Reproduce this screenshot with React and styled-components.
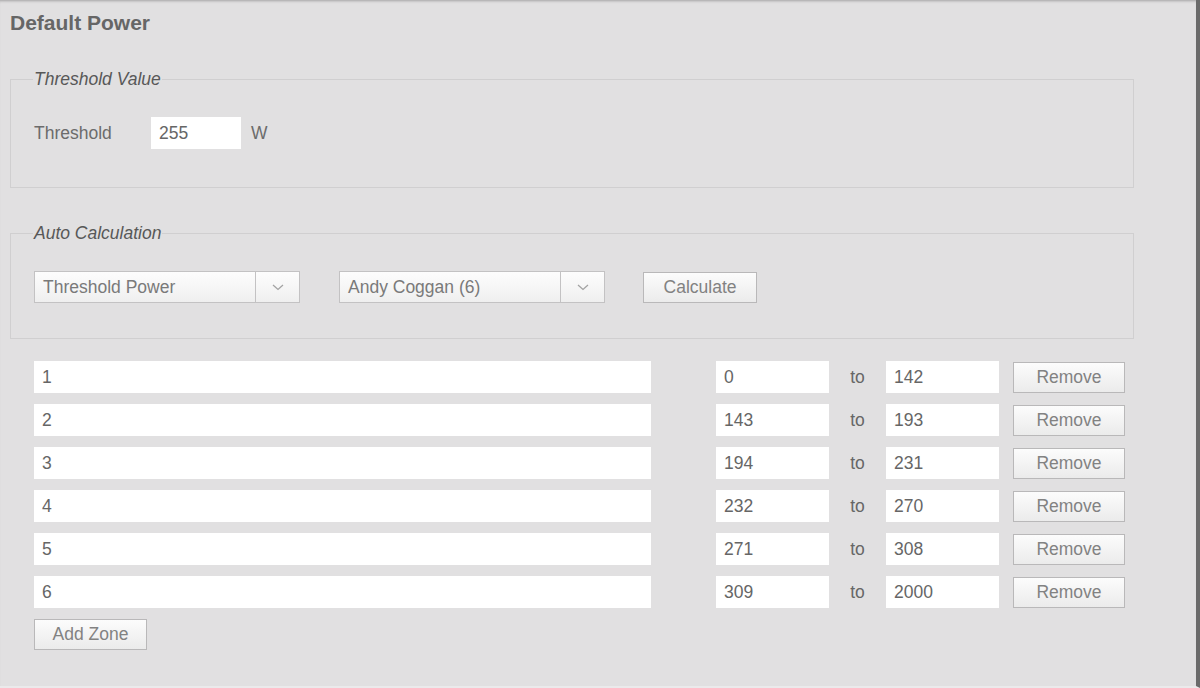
import React from "react";
import styled, { createGlobalStyle } from "styled-components";

const Global = createGlobalStyle`
  html, body { margin: 0; padding: 0; background: #e1e0e1; }
  body { font-family: "Liberation Sans", Arial, Helvetica, sans-serif; }
  * { box-sizing: border-box; }
`;

const Page = styled.div`
  position: relative;
  width: 1200px;
  height: 688px;
  overflow: hidden;
  background: #e1e0e1;
  padding: 11px 62px 0 10px;
  border-right: 4px solid #6a6a6a;
  box-shadow: inset 0 3px 3px -2px rgba(0, 0, 0, 0.28);
  border-bottom: 2px solid #ebeaeb;
`;

const Title = styled.h1`
  margin: 0;
  font-size: 21px;
  line-height: 24px;
  font-weight: bold;
  color: #666;
`;

const Fieldset = styled.fieldset`
  margin: ${(p) => p.$top}px 0 0 0;
  padding: 28px 23px ${(p) => p.$bottom}px 23px;
  border: 1px solid #d0cfd0;
  min-width: 0;
`;

const Legend = styled.legend`
  padding: 0 1px;
  margin-left: -1px;
  font-size: 17.5px;
  line-height: 20px;
  font-style: italic;
  color: #585858;
`;

const Row = styled.div`
  display: flex;
  align-items: center;
`;

const Label = styled.span`
  width: 117px;
  font-size: 17.5px;
  color: #6c6c6c;
`;

const Unit = styled.span`
  margin-left: 10px;
  font-size: 17.5px;
  color: #6c6c6c;
`;

const TextInput = styled.input`
  width: ${(p) => p.$w}px;
  height: 32px;
  border: none;
  outline: none;
  background: #fff;
  padding: 0 0 0 8px;
  font-family: inherit;
  font-size: 17.5px;
  color: #666;
  flex: none;
`;

const SelectBox = styled.div`
  display: flex;
  width: 266px;
  height: 32px;
  border: 1px solid #c3c2c3;
  background: linear-gradient(#fdfdfd, #efefef);
  margin-right: ${(p) => p.$gap || 0}px;
  flex: none;
`;

const SelectText = styled.div`
  flex: 1;
  padding-left: 8px;
  display: flex;
  align-items: center;
  font-size: 17.5px;
  color: #7a7a7a;
  border-right: 1px solid #c3c2c3;
`;

const SelectArrow = styled.div`
  width: 43px;
  display: flex;
  align-items: center;
  justify-content: center;
`;

const Button = styled.button`
  width: ${(p) => p.$w}px;
  height: 31px;
  border: 1px solid #b9b8b9;
  background: linear-gradient(#fcfcfc, #ebebeb);
  font-family: inherit;
  font-size: 17.5px;
  color: #828282;
  padding: 0;
  flex: none;
  cursor: pointer;
`;

const Zones = styled.div`
  margin-top: 22px;
  padding-left: 24px;
  display: flex;
  flex-direction: column;
  gap: 11px;
`;

const ZoneRow = styled.div`
  display: flex;
  align-items: center;
  height: 32px;
`;

const Spacer = styled.div`
  width: ${(p) => p.$w}px;
  flex: none;
`;

const To = styled.span`
  width: 57px;
  text-align: center;
  font-size: 17.5px;
  color: #666;
  flex: none;
`;

const Chevron = () => (
  <svg width="12" height="7" viewBox="0 0 12 7">
    <path d="M1 1 L6 5.5 L11 1" fill="none" stroke="#a3a3a3" strokeWidth="1.3" />
  </svg>
);

const zones = [
  ["1", "0", "142"],
  ["2", "143", "193"],
  ["3", "194", "231"],
  ["4", "232", "270"],
  ["5", "271", "308"],
  ["6", "309", "2000"],
];

export default function App() {
  return (
    <>
      <Global />
      <Page>
        <Title>Default Power</Title>
        <Fieldset $top={34} $bottom={38}>
          <Legend>Threshold Value</Legend>
          <Row>
            <Label>Threshold</Label>
            <TextInput $w={90} readOnly value="255" />
            <Unit>W</Unit>
          </Row>
        </Fieldset>
        <Fieldset $top={35} $bottom={35}>
          <Legend>Auto Calculation</Legend>
          <Row>
            <SelectBox $gap={39}>
              <SelectText>Threshold Power</SelectText>
              <SelectArrow><Chevron /></SelectArrow>
            </SelectBox>
            <SelectBox $gap={38}>
              <SelectText>Andy Coggan (6)</SelectText>
              <SelectArrow><Chevron /></SelectArrow>
            </SelectBox>
            <Button $w={114}>Calculate</Button>
          </Row>
        </Fieldset>
        <Zones>
          {zones.map(([name, from, to]) => (
            <ZoneRow key={name}>
              <TextInput $w={617} readOnly value={name} />
              <Spacer $w={65} />
              <TextInput $w={113} readOnly value={from} />
              <To>to</To>
              <TextInput $w={113} readOnly value={to} />
              <Spacer $w={14} />
              <Button $w={112}>Remove</Button>
            </ZoneRow>
          ))}
          <Row>
            <Button $w={113}>Add Zone</Button>
          </Row>
        </Zones>
      </Page>
    </>
  );
}
